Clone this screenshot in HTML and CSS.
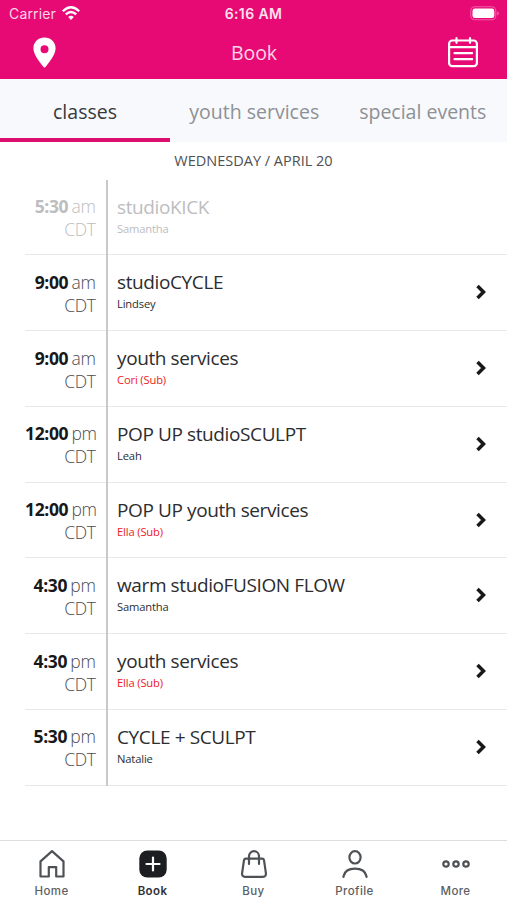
FILE: index.html
```html
<!DOCTYPE html>
<html lang="en">
<head>
<meta charset="utf-8">
<title>Book</title>
<link rel="stylesheet" href="styles.css">
</head>
<body>
<div class="app">
  <header class="header">
    <div class="status">
      <div class="carrier"><span>Carrier</span>
        <svg width="18" height="15" viewBox="0 0 18 15" fill="none" stroke="#fff" stroke-width="2.3"><path d="M.8 5.3Q9-2.7 17.2 5.3M3.8 8.4Q9 3.5 14.2 8.4"/><path d="M6.2 11Q9 8.6 11.8 11L9 14Z" fill="#fff" stroke="none"/></svg>
      </div>
      <div class="clock">6:16 AM</div>
      <svg class="battery" width="30" height="15" viewBox="0 0 30 15"><rect x=".8" y=".8" width="25" height="13" rx="4" fill="none" stroke="#f15ca5" stroke-width="1.1"/><rect x="2.5" y="2.5" width="21.8" height="9.6" rx="2.4" fill="#fff"/><path d="M27.4 5.2Q30 7.3 27.4 9.4Z" fill="#f382b9"/></svg>
    </div>
    <div class="nav">
      <svg class="pin" width="23" height="31" viewBox="0 0 23 31"><path fill="#fff" fill-rule="evenodd" d="M11.5.5C5.2.5.4 5.2.4 11.3c0 6.6 6.4 13.8 9.7 18.3q1.4 1.7 2.8 0c3.3-4.5 9.7-11.7 9.7-18.3C22.6 5.2 17.8.5 11.5.5Zm0 7.800a4 4 0 1 1 0 8 4 4 0 0 1 0-8Z"/></svg>
      <h1 class="title">Book</h1>
      <svg class="calendar" width="30" height="31" viewBox="0 0 30 31" fill="none" stroke="#fff" stroke-width="2.200" stroke-linecap="round"><rect x="1.100" y="3.500" width="27.800" height="25.700" rx="3.200"/><path d="M1.500 10.200h27M8.500 1.200v4.600M22 1.200v4.600M6.500 16.200h17.600M6.500 22.200h17.600"/></svg>
    </div>
  </header>
  <nav class="tabs">
    <a class="tab active"><span>classes</span></a>
    <a class="tab"><span>youth services</span></a>
    <a class="tab"><span>special events</span></a>
  </nav>
  <h2 class="date">WEDNESDAY / APRIL 20</h2>
  <main class="schedule">
    <div class="row past"><div class="time"><b>5:30</b> am<br>CDT</div><div class="info"><div class="name">studioKICK</div><div class="coach">Samantha</div></div></div>
    <div class="row"><div class="time"><b>9:00</b> am<br>CDT</div><div class="info"><div class="name">studioCYCLE</div><div class="coach">Lindsey</div></div><svg class="chevron" viewBox="0 0 12 18"><path d="M2.500 3l6 6-6 6"/></svg></div>
    <div class="row"><div class="time"><b>9:00</b> am<br>CDT</div><div class="info"><div class="name">youth services</div><div class="coach sub">Cori (Sub)</div></div><svg class="chevron" viewBox="0 0 12 18"><path d="M2.500 3l6 6-6 6"/></svg></div>
    <div class="row"><div class="time"><b>12:00</b> pm<br>CDT</div><div class="info"><div class="name">POP UP studioSCULPT</div><div class="coach">Leah</div></div><svg class="chevron" viewBox="0 0 12 18"><path d="M2.500 3l6 6-6 6"/></svg></div>
    <div class="row"><div class="time"><b>12:00</b> pm<br>CDT</div><div class="info"><div class="name">POP UP youth services</div><div class="coach sub">Ella (Sub)</div></div><svg class="chevron" viewBox="0 0 12 18"><path d="M2.500 3l6 6-6 6"/></svg></div>
    <div class="row"><div class="time"><b>4:30</b> pm<br>CDT</div><div class="info"><div class="name">warm studioFUSION FLOW</div><div class="coach">Samantha</div></div><svg class="chevron" viewBox="0 0 12 18"><path d="M2.500 3l6 6-6 6"/></svg></div>
    <div class="row"><div class="time"><b>4:30</b> pm<br>CDT</div><div class="info"><div class="name">youth services</div><div class="coach sub">Ella (Sub)</div></div><svg class="chevron" viewBox="0 0 12 18"><path d="M2.500 3l6 6-6 6"/></svg></div>
    <div class="row"><div class="time"><b>5:30</b> pm<br>CDT</div><div class="info"><div class="name">CYCLE + SCULPT</div><div class="coach">Natalie</div></div><svg class="chevron" viewBox="0 0 12 18"><path d="M2.500 3l6 6-6 6"/></svg></div>
  </main>
  <footer class="tabbar">
    <a class="item"><svg viewBox="0 0 30 30"><path d="M3.500 12.300 15 2.200l11.500 10.100v15.200h-7.300v-9.300h-7.400v9.300H3.500Z"/></svg><span>Home</span></a>
    <a class="item current"><svg viewBox="0 0 30 30"><rect x="1.300" y="1.500" width="27.400" height="27" rx="8" fill="#1c1e21" stroke="none"/><path d="M15 8.500v13M8.500 15h13" stroke="#fff"/></svg><span>Book</span></a>
    <a class="item"><svg viewBox="0 0 30 30"><path d="M6.800 9.700h16.400q1.500 0 1.800 1.500l1.900 13q.3 3.600-2.900 3.600H6q-3.200 0-2.900-3.600l1.900-13q.3-1.500 1.800-1.500ZM10 15V7.200a5 5 0 0 1 10 0V15"/></svg><span>Buy</span></a>
    <a class="item"><svg viewBox="0 0 30 30"><ellipse cx="15" cy="8.300" rx="5.600" ry="6.200"/><path d="M3.500 28v-.8q1.700-7.500 11.500-7.500t11.500 7.500v.8"/></svg><span>Profile</span></a>
    <a class="item"><svg viewBox="0 0 30 30"><circle cx="5" cy="15" r="2.700"/><circle cx="15" cy="15" r="2.700"/><circle cx="25" cy="15" r="2.700"/></svg><span>More</span></a>
  </footer>
</div>
</body>
</html>
```
FILE: styles.css
```css
* { box-sizing: border-box; }
body { margin: 0; background: #fff; font-family: "Open Sans", sans-serif; color: #2c2d30; }
.app { width: 507px; height: 900px; display: flex; flex-direction: column; overflow: hidden; white-space: nowrap; }
.header { height: 79px; background: #e70a74; color: #fff; flex: none; }
.status { height: 27px; display: grid; grid-template-columns: 1fr auto 1fr; align-items: center; padding: 0 7px 0 9px; font-family: Inter, sans-serif; }
.carrier { display: flex; align-items: center; gap: 6px; font-size: 14px; color: #fcd3e7; letter-spacing: .15px; }
.clock { font-size: 14px; font-weight: 600; color: #fee1ef; letter-spacing: .4px; margin-left: -2px; }
.battery { justify-self: end; }
.nav { height: 52px; display: grid; grid-template-columns: 1fr auto 1fr; align-items: center; padding: 0 29px 2px 33px; }
.title { margin: 0 0 0 -3px; font-size: 19.500px; font-weight: 400; color: #fcd3e7; letter-spacing: -.1px; }
.calendar { justify-self: end; }
.tabs { height: 63px; flex: none; display: grid; grid-template-columns: 170px 1fr 1fr; background: #f7f9fc; }
.tab { display: flex; justify-content: center; align-items: center; font-size: 19.500px; color: #8e9095; border-bottom: 4px solid transparent; padding: 6px 0 0; }
.tab.active { color: #37393c; border-color: #dc0f70; }
.date { margin: 0; height: 37.500px; line-height: 38px; text-align: center; font-size: 14.500px; font-weight: 400; color: #505052; flex: none; }
.schedule { flex: 1; }
.row { height: 75.780px; margin-left: 25px; display: flex; border-bottom: 1px solid #e8e8ea; }
.time { width: 83px; padding: 15.500px 10.500px 0 0; border-right: 2px solid #c9c9cb; margin-bottom: -1px; text-align: right; font-size: 17.500px; line-height: 23px; font-weight: 300; word-spacing: -1px; letter-spacing: -.35px; flex: none; color: #4b4c50; }
.time b { font-weight: 700; color: #17181a; }
.info { padding: 15px 0 0 9px; flex: 1; }
.name { font-size: 19px; line-height: 25px; letter-spacing: -.39px; }
.coach { font-size: 11.200px; line-height: 18px; letter-spacing: -.15px; }
.sub { color: #ed2027; }
.past .time, .past .time b, .past .info { color: #bdbdc0; }
.chevron { width: 12px; height: 18px; margin: 28px 20px 0 0; fill: none; stroke: #17181a; stroke-width: 3.500px; }
.tabbar { height: 60px; flex: none; border-top: 1px solid #dddddf; display: grid; grid-template-columns: repeat(5, 1fr); padding: 8px 1px 0; }
.item { display: flex; flex-direction: column; align-items: center; font-family: Inter, sans-serif; font-size: 11.500px; font-weight: 500; line-height: 16px; color: #5c5e62; letter-spacing: .4px; }
.item svg { width: 30px; height: 30px; margin-bottom: 4px; fill: none; stroke: #4e5155; stroke-width: 2.200; stroke-linejoin: round; stroke-linecap: round; }
.current { color: #303236; font-weight: 600; }
```
